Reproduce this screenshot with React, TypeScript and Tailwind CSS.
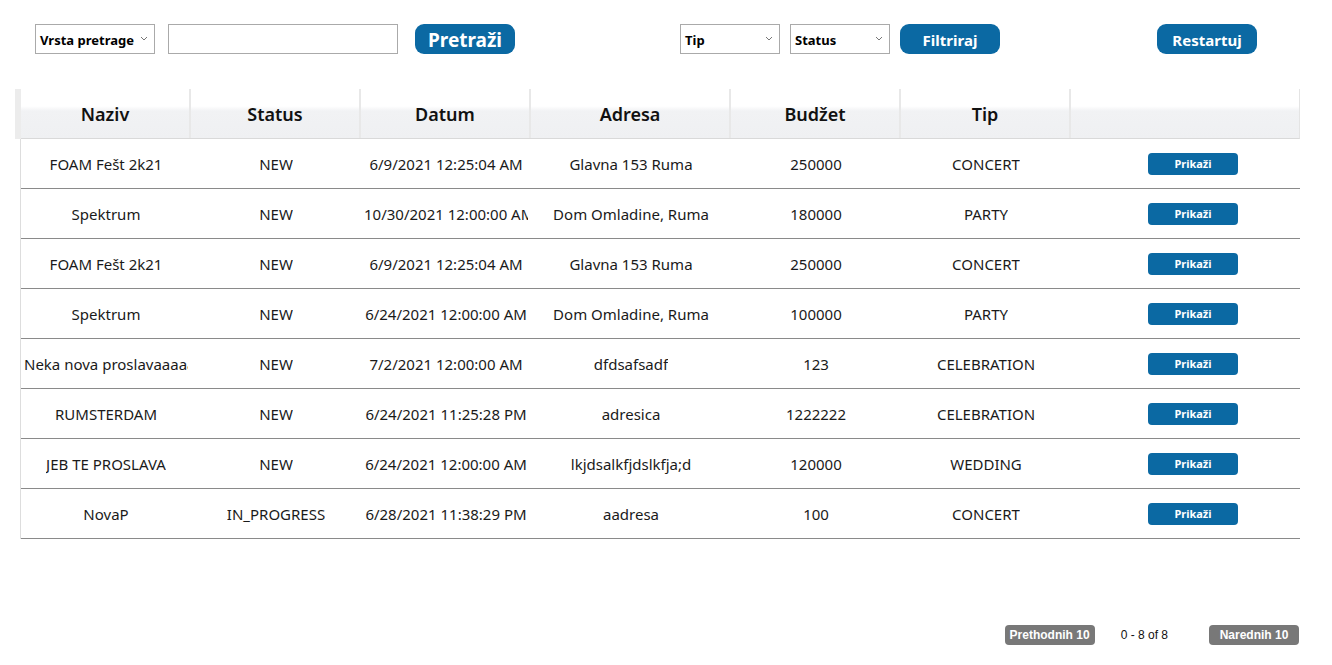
import React from "react";

const rows = [
  ["FOAM Fešt 2k21", "NEW", "6/9/2021 12:25:04 AM", "Glavna 153 Ruma", "250000", "CONCERT"],
  ["Spektrum", "NEW", "10/30/2021 12:00:00 AM", "Dom Omladine, Ruma", "180000", "PARTY"],
  ["FOAM Fešt 2k21", "NEW", "6/9/2021 12:25:04 AM", "Glavna 153 Ruma", "250000", "CONCERT"],
  ["Spektrum", "NEW", "6/24/2021 12:00:00 AM", "Dom Omladine, Ruma", "100000", "PARTY"],
  ["Neka nova proslavaaaaaaa", "NEW", "7/2/2021 12:00:00 AM", "dfdsafsadf", "123", "CELEBRATION"],
  ["RUMSTERDAM", "NEW", "6/24/2021 11:25:28 PM", "adresica", "1222222", "CELEBRATION"],
  ["JEB TE PROSLAVA", "NEW", "6/24/2021 12:00:00 AM", "lkjdsalkfjdslkfja;d", "120000", "WEDDING"],
  ["NovaP", "IN_PROGRESS", "6/28/2021 11:38:29 PM", "aadresa", "100", "CONCERT"],
];

const headers = ["Naziv", "Status", "Datum", "Adresa", "Budžet", "Tip", ""];
const grid = "grid grid-cols-[170px_170px_170px_200px_170px_170px_228px]";

function Chevron() {
  return (
    <svg width="8" height="5" viewBox="0 0 8 5" className="shrink-0 mb-[2px]">
      <path d="M1 1l3 3 3-3" fill="none" stroke="#777" strokeWidth="1" />
    </svg>
  );
}

function Select({ label, width }: { label: string; width: string }) {
  return (
    <div
      className={`${width} h-[30px] border border-[#aaaaaa] bg-white flex items-center justify-between pl-[4px] pr-[6px] text-[13px] font-bold text-black`}
    >
      <span className="pt-[3px]">{label}</span>
      <Chevron />
    </div>
  );
}

function BlueButton({ label, size }: { label: string; size: string }) {
  return (
    <button
      className={`w-[100px] h-[30px] rounded-[9px] bg-[#0b69a3] text-white font-bold ${size} leading-none flex items-center justify-center pt-[2px]`}
    >
      {label}
    </button>
  );
}

export default function App() {
  return (
    <div
      className="w-[1332px] h-[665px] bg-white text-[#1a1a1a] overflow-hidden"
      style={{ fontFamily: '"Noto Sans", "Open Sans", sans-serif' }}
    >
      <div className="flex items-center pt-[24px] pl-[35px] h-[54px]">
        <Select label="Vrsta pretrage" width="w-[120px]" />
        <div className="ml-[13px] w-[230px] h-[30px] border border-[#aaaaaa] bg-white" />
        <div className="ml-[17px]">
          <BlueButton label="Pretraži" size="text-[19px]" />
        </div>
        <div className="ml-[165px]">
          <Select label="Tip" width="w-[100px]" />
        </div>
        <div className="ml-[10px]">
          <Select label="Status" width="w-[100px]" />
        </div>
        <div className="ml-[10px]">
          <BlueButton label="Filtriraj" size="text-[15px]" />
        </div>
        <div className="ml-[157px]">
          <BlueButton label="Restartuj" size="text-[15px]" />
        </div>
      </div>

      <div className="mt-[35px] ml-[15px] w-[1285px]">
        <div className="flex">
          <div className="w-[6px] h-[50px] bg-[#ececec]" />
          <div
            className={`${grid} h-[50px] border-b border-[#d9d9d9] bg-[linear-gradient(to_bottom,#ffffff_0%,#ffffff_35%,#f1f2f4_45%,#eff0f2_100%)] border-r border-r-[#e4e4e4]`}
          >
            {headers.map((h, i) => (
              <div
                key={i}
                className={`flex items-center justify-center pt-[2px] text-[18px] font-semibold text-[#111] ${i < 6 ? "border-r-2 border-[#e8e8e8]" : ""}`}
              >
                {h}
              </div>
            ))}
          </div>
        </div>
        <div className="ml-[5px] border-l border-[#dddddd]">
          {rows.map((r, ri) => (
            <div key={ri} className={`${grid} h-[50px] border-b border-[#8a8a8a]`}>
              {r.map((c, ci) => (
                <div
                  key={ci}
                  className="px-[3px] pt-[2px] flex items-center justify-center overflow-hidden whitespace-nowrap text-[15px]"
                >
                  <span className="block overflow-hidden">{c}</span>
                </div>
              ))}
              <div className="flex items-center justify-center pl-[16px]">
                <button className="w-[90px] h-[22px] rounded-[4px] bg-[#0b69a3] text-white text-[11px] font-bold leading-none">
                  Prikaži
                </button>
              </div>
            </div>
          ))}
        </div>
      </div>

      <div
        className="flex items-center justify-end mt-[86px] pr-[33px]"
        style={{ fontFamily: '"Liberation Sans", Arial, sans-serif' }}
      >
        <button className="w-[90px] h-[20px] rounded-[4px] bg-[#787878] text-white text-[12px] font-bold leading-none">
          Prethodnih 10
        </button>
        <span className="ml-[26px] text-[12px] text-[#111]">0 - 8 of 8</span>
        <button className="ml-[41px] w-[90px] h-[20px] rounded-[4px] bg-[#787878] text-white text-[12px] font-bold leading-none">
          Narednih 10
        </button>
      </div>
    </div>
  );
}
